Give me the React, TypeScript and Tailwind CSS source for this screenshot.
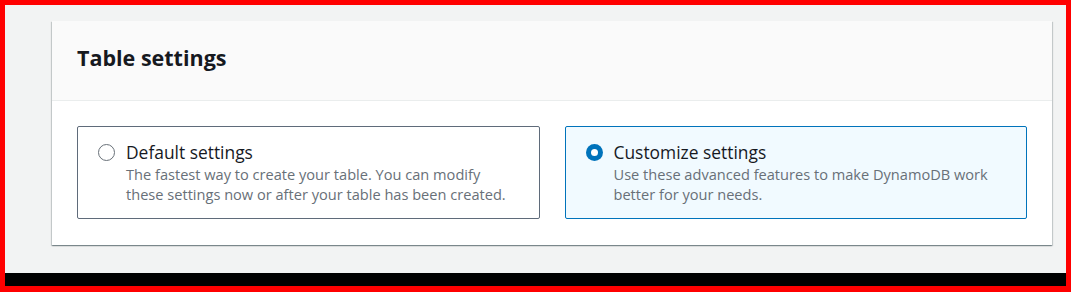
import React from "react";

function Radio({ checked }: { checked: boolean }) {
  return checked ? (
    <span className="flex h-[17px] w-[17px] shrink-0 items-center justify-center rounded-full bg-[#0073bb]">
      <span className="block h-[7px] w-[7px] rounded-full bg-white" />
    </span>
  ) : (
    <span className="block h-[17px] w-[17px] shrink-0 rounded-full border-[1.5px] border-[#687078] bg-white" />
  );
}

function Option({
  checked,
  title,
  desc,
}: {
  checked: boolean;
  title: string;
  desc: string[];
}) {
  return (
    <div
      className={
        checked
          ? "flex flex-1 gap-[11px] rounded-[2px] border border-[#0073bb] bg-[#f1faff] pl-[20px] pr-[16px] pt-[14px] pb-[14px]"
          : "flex flex-1 gap-[11px] rounded-[2px] border border-[#5f6b7a] bg-white pl-[20px] pr-[16px] pt-[14px] pb-[14px]"
      }
    >
      <div className="pt-[3px]">
        <Radio checked={checked} />
      </div>
      <div className="flex flex-col">
        <div className="text-[17.4px] leading-[22px] text-[#16191f]">{title}</div>
        <div className="mt-[1px] text-[14.6px] leading-[20px] text-[#687078]">
          {desc.map((d, i) => (
            <div key={i}>{d}</div>
          ))}
        </div>
      </div>
    </div>
  );
}

export default function App() {
  return (
    <div
      className="h-[292px] w-[1071px] border-t-[5px] border-r-[5px] border-b-[6px] border-l-[5px] border-[#ff0000] bg-[#000000]"
      style={{ fontFamily: '"Open Sans", "Noto Sans", sans-serif' }}
    >
      <div className="h-[268px] bg-[#f2f3f3] pl-[47px] pr-[14px] pt-[16px]">
        <div className="bg-white shadow-[0_1px_1px_0_rgba(0,28,36,0.3),1px_1px_1px_0_rgba(0,28,36,0.15),-1px_1px_1px_0_rgba(0,28,36,0.15)]">
          <div className="flex h-[80px] items-center border-b border-[#eaeded] bg-[#fafafa] pb-[5px] pl-[25px]">
            <h2 className="text-[21.5px] font-bold leading-[28px] text-[#16191f]">
              Table settings
            </h2>
          </div>
          <div className="flex gap-[25px] px-[25px] pt-[25px] pb-[26px]">
            <Option
              checked={false}
              title="Default settings"
              desc={[
                "The fastest way to create your table. You can modify",
                "these settings now or after your table has been created.",
              ]}
            />
            <Option
              checked={true}
              title="Customize settings"
              desc={[
                "Use these advanced features to make DynamoDB work",
                "better for your needs.",
              ]}
            />
          </div>
        </div>
      </div>
    </div>
  );
}
